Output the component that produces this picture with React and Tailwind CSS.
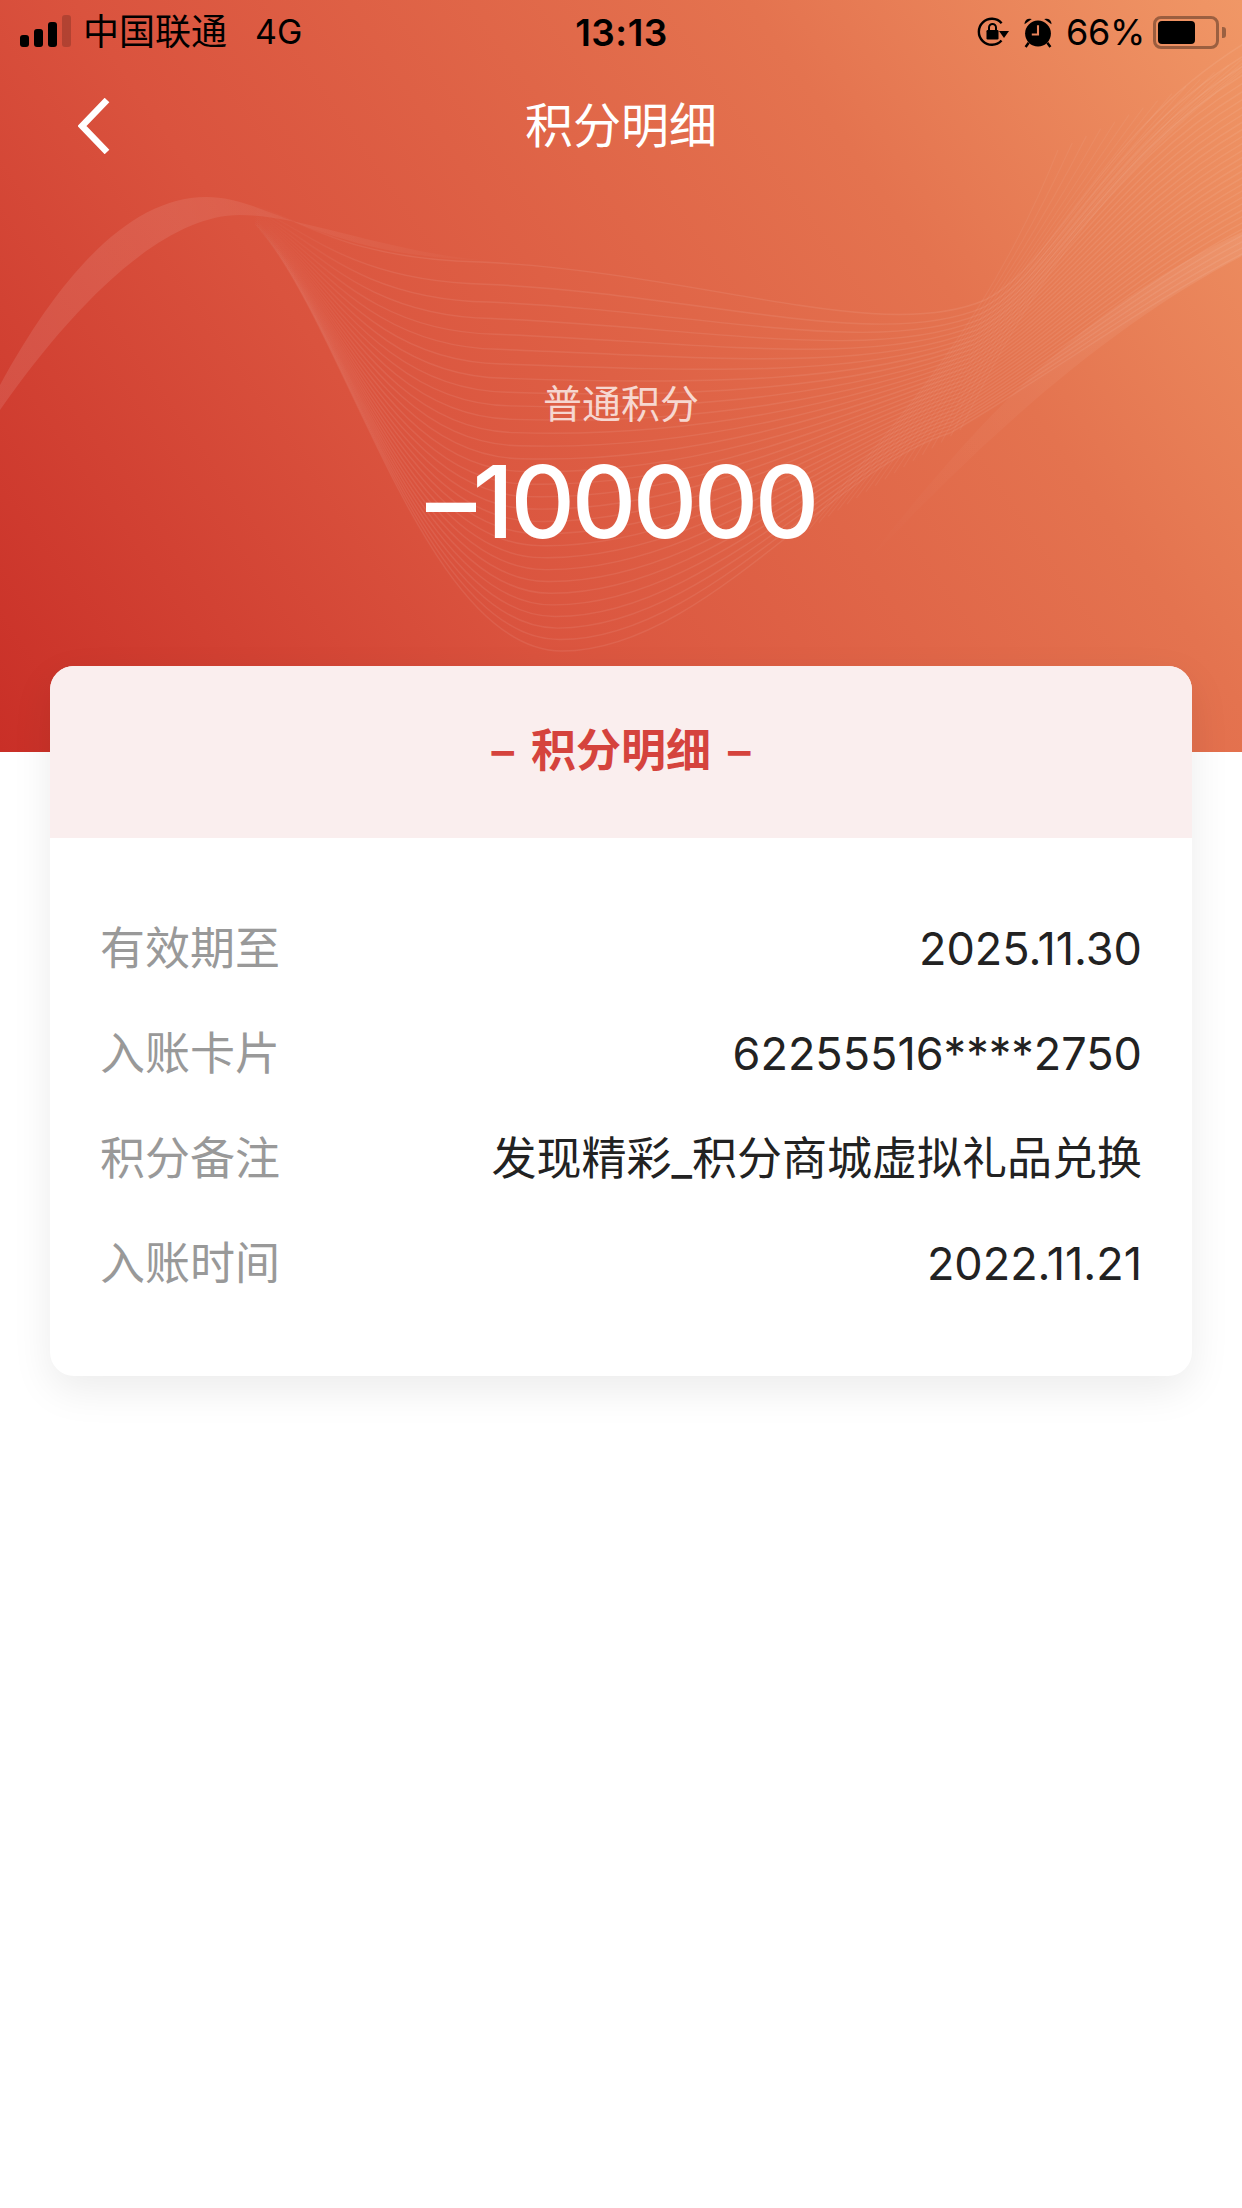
const CJK = "font-['Inter','Noto_Sans_CJK_SC',sans-serif]";

const lerp = (a, b, t) => a + (b - a) * t;

// Edge curves of the big wave bundle (same number of points, so they can be blended)
const topEdge = [
  [206, 197], [285, 197], [310, 258], [480, 262],
  [700, 272], [880, 345], [985, 300],
  [1060, 262], [1100, 130], [1250, 40],
];
const bottomEdge = [
  [206, 197], [320, 197], [400, 651], [562, 651],
  [700, 651], [830, 470], [950, 433],
  [1050, 375], [1150, 300], [1250, 250],
];

const pathFor = (pts) =>
  `M${pts[0][0]},${pts[0][1]} ` +
  [1, 4, 7]
    .map((i) => `C${pts[i][0]},${pts[i][1]} ${pts[i + 1][0]},${pts[i + 1][1]} ${pts[i + 2][0]},${pts[i + 2][1]}`)
    .join(" ");

const waveLines = Array.from({ length: 30 }, (_, i) => {
  const t = Math.pow(i / 29, 0.85);
  return pathFor(topEdge.map((p, k) => [lerp(p[0], bottomEdge[k][0], t), lerp(p[1], bottomEdge[k][1], t)]));
});

// Steep lines that run from the bowl up to the top right corner
const rightLines = Array.from({ length: 18 }, (_, i) => {
  const t = i / 17;
  const x = lerp(1058, 1300, t);
  const y = lerp(150, 30, t);
  return `M${lerp(800, 960, t)},${lerp(535, 430, t)} C${lerp(900, 1010, t)},${lerp(420, 330, t)} ${lerp(990, 1090, t)},${lerp(320, 170, t)} ${x},${y}`;
});

function Waves() {
  return (
    <svg className="absolute inset-0 w-full h-full" viewBox="0 0 1242 752" fill="none" aria-hidden="true">
      <defs>
        <linearGradient id="band" x1="0" y1="400" x2="480" y2="220" gradientUnits="userSpaceOnUse">
          <stop offset="0" stopColor="#fff" stopOpacity="0.1" />
          <stop offset="0.45" stopColor="#fff" stopOpacity="0.09" />
          <stop offset="1" stopColor="#fff" stopOpacity="0.01" />
        </linearGradient>
        <linearGradient id="fan" x1="250" y1="0" x2="380" y2="0" gradientUnits="userSpaceOnUse">
          <stop offset="0" stopColor="#fff" stopOpacity="0" />
          <stop offset="1" stopColor="#fff" stopOpacity="0.075" />
        </linearGradient>
        <linearGradient id="rightBand" x1="1242" y1="240" x2="860" y2="570" gradientUnits="userSpaceOnUse">
          <stop offset="0" stopColor="#fff" stopOpacity="0.08" />
          <stop offset="1" stopColor="#fff" stopOpacity="0" />
        </linearGradient>
      </defs>
      <path
        d="M0,385 C60,275 130,197 206,197 C270,197 320,255 480,260 C380,250 300,215 240,215 C160,215 70,310 0,410 Z"
        fill="url(#band)"
      />
      <path d="M1242,232 C1100,300 1000,390 860,570 C1000,420 1120,320 1242,256 Z" fill="url(#rightBand)" />
      {waveLines.map((d, i) => (
        <path key={i} d={d} stroke="url(#fan)" strokeWidth="1.4" />
      ))}
      {rightLines.map((d, i) => (
        <path key={i} d={d} stroke="#fff" strokeOpacity="0.05" strokeWidth="1.2" />
      ))}
    </svg>
  );
}

function Signal() {
  return (
    <svg width="52" height="34" viewBox="0 0 52 34" className="block" aria-hidden="true">
      <rect x="0" y="20" width="9" height="12" rx="3" fill="#000" />
      <rect x="14" y="14" width="9" height="18" rx="3" fill="#000" />
      <rect x="28" y="7" width="9" height="25" rx="3" fill="#000" />
      <rect x="42" y="0" width="9" height="32" rx="3" fill="#000" fillOpacity="0.18" />
    </svg>
  );
}

function RotationLock() {
  return (
    <svg width="32" height="30" viewBox="0 0 32 30" className="block" aria-hidden="true">
      <path d="M24.5 23.5 A13 13 0 1 1 24.6 6.2" fill="none" stroke="#000" strokeWidth="2.4" />
      <path d="M22 14 L32 14 L27 21 Z" fill="#000" />
      <rect x="9.5" y="13" width="12" height="9.5" rx="1.2" fill="#000" />
      <path d="M12 13 V10.5 a3.5 3.5 0 0 1 7 0 V13" fill="none" stroke="#000" strokeWidth="2" />
    </svg>
  );
}

function Alarm() {
  return (
    <svg width="30" height="31" viewBox="0 0 28 30" className="block" aria-hidden="true">
      <circle cx="14" cy="16" r="12.5" fill="#000" />
      <path d="M1 7 a5 5 0 0 1 7 -5 Z" fill="#000" />
      <path d="M27 7 a5 5 0 0 0 -7 -5 Z" fill="#000" />
      <path d="M5 25 L2 29 M23 25 L26 29" stroke="#000" strokeWidth="2.4" />
      <path d="M14 8 V17 H8" fill="none" stroke="#e8835b" strokeWidth="2" />
    </svg>
  );
}

function Battery() {
  return (
    <div className="flex items-center gap-[3px]">
      <div className="w-[66px] h-[33px] rounded-[8px] border-[3px] border-[rgba(0,0,0,0.35)] p-[2px]">
        <div className="w-[37px] h-full rounded-[4px] bg-black" />
      </div>
      <div className="w-[4px] h-[11px] rounded-r-[3px] bg-[rgba(0,0,0,0.35)]" />
    </div>
  );
}

function StatusBar() {
  return (
    <div className="relative h-[64px] pl-[20px] pr-[16px] flex items-center justify-between text-black text-[36px] leading-none">
      <div className="flex items-center gap-[11px] w-[400px]">
        <Signal />
        <span>中国联通</span>
        <span className="ml-[17px] text-[34px]">4G</span>
      </div>
      <span className="font-semibold text-[37px] tracking-[0.5px] mr-[3px]">13:13</span>
      <div className="flex items-center justify-end w-[400px]">
        <RotationLock />
        <div className="w-[14px]" />
        <Alarm />
        <div className="w-[13px]" />
        <span className="tracking-[-0.3px]">66%</span>
        <div className="w-[8px]" />
        <Battery />
      </div>
    </div>
  );
}

function NavBar() {
  return (
    <div className="relative h-[124px] flex items-center justify-center">
      <button className="absolute left-[78px] top-[34px]" aria-label="返回">
        <svg width="32" height="56" viewBox="0 0 32 56" className="block" fill="none">
          <path d="M29 2 L4 28 L29 54" stroke="#fff" strokeWidth="6.5" />
        </svg>
      </button>
      <span className="text-white text-[48px] leading-none">积分明细</span>
    </div>
  );
}

const rows = [
  ["有效期至", "2025.11.30"],
  ["入账卡片", "62255516****2750"],
  ["积分备注", "发现精彩_积分商城虚拟礼品兑换"],
  ["入账时间", "2022.11.21"],
];

export default function App() {
  return (
    <div className={`${CJK} w-[1242px] min-h-[2208px] bg-white`}>
      <div className="relative h-[752px] bg-[linear-gradient(55deg,#c92f27_0%,#da533e_34%,#e4734f_72%,#f09766_100%)]">
        <Waves />
        <StatusBar />
        <NavBar />
        <div className="relative flex flex-col items-center pt-[191px]">
          <span className="text-[39px] leading-[50px] text-white/75">普通积分</span>
          <span className="mt-[18px] text-white text-[100px] leading-[110px] font-medium tracking-[-3.5px]">–100000</span>
        </div>
      </div>
      <div className="relative mx-[50px] -mt-[86px] rounded-[24px] bg-white overflow-hidden shadow-[0_14px_40px_rgba(0,0,0,0.08)]">
        <div className="h-[172px] pb-[3px] bg-[#faeeee] flex items-center justify-center gap-[17px] text-[#d5433d] text-[45px] font-semibold leading-none">
          <span>–</span>
          <span>积分明细</span>
          <span>–</span>
        </div>
        <div className="px-[50px] pt-[58px] pb-[60px]">
          {rows.map(([k, v]) => (
            <div key={k} className="h-[105px] flex items-center justify-between text-[45px] leading-none">
              <span className="text-[#999999]">{k}</span>
              <span className="text-[#222222]">{v}</span>
            </div>
          ))}
        </div>
      </div>
    </div>
  );
}
